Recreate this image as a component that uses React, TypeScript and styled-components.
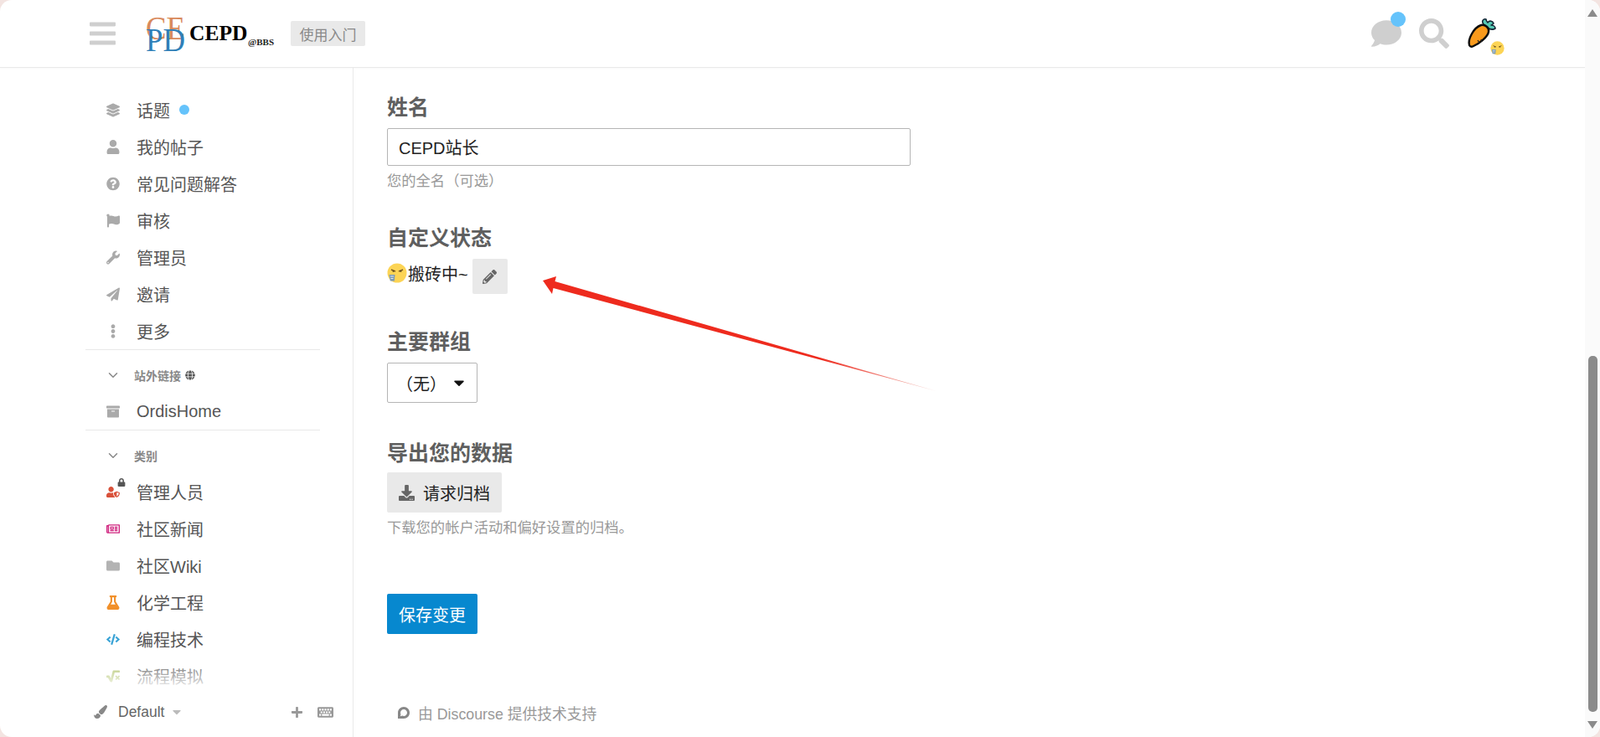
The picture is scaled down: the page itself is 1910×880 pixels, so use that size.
import React from 'react';
import styled, { createGlobalStyle } from 'styled-components';
import {
	FaLayerGroup, FaUser, FaQuestionCircle, FaFlag, FaWrench, FaPaperPlane, FaEllipsisV,
	FaGlobe, FaArchive, FaUserShield, FaRegNewspaper, FaFolder, FaFlask, FaCode, FaSquareRootAlt,
	FaPaintBrush, FaPlus, FaKeyboard, FaCaretDown, FaLock, FaDownload, FaPencilAlt, FaComment, FaSearch, FaBars, FaDiscourse,
} from 'react-icons/fa';
import { FiChevronDown } from 'react-icons/fi';

const FONT = `"Liberation Sans", "Noto Sans CJK SC", sans-serif`;

const GlobalStyle = createGlobalStyle`
	html, body {
		margin: 0;
		height: 100%;
		overflow: hidden;
		background: #f3e4e1;
		font-family: ${FONT};
	}
`;

const FaceEmoji = ({ size }: { size: number }) => (
	<svg width={size} height={size} viewBox="0 0 24 24">
		<circle cx="12" cy="12" r="11.5" fill="#fcd455" />
		<path d="M5 8l5 2M19 8l-5 2" stroke="#7a5a20" strokeWidth="1.4" fill="none" />
		<path d="M7 9.5l1 1M16 10.5l1-1" stroke="#4b3a18" strokeWidth="1.6" />
		<path d="M2.5 14h7l-.7 7.5h-5z" fill="#7d9bb5" />
		<path d="M4 16h4M4.5 18.5h3" stroke="#dfe8ee" strokeWidth="1" />
	</svg>
);

const Carrot = () => (
	<svg width="36" height="38" viewBox="0 0 36 38">
		<path d="M20 8c-3-4 0-7 3-6 0 2 1 3 2 4 2-3 6-2 7 1-1 1-2 2-3 2 3 0 5 2 5 4-3 2-6 1-8 0z" fill="#56c9b4" stroke="#123" strokeWidth="1.6" strokeLinejoin="round" />
		<path d="M3 33C1 26 8 12 17 9c5-1 10 3 9 8-1 6-11 14-18 17-2 1-4 1-5-1z" fill="#f99a1c" stroke="#0c0c0c" strokeWidth="2.4" strokeLinejoin="round" />
		<path d="M13 27l2 3M17 26l1 3" stroke="#222" strokeWidth="1.3" />
	</svg>
);

const navTop = [
	{ icon: <FaLayerGroup />, label: '话题', dot: true },
	{ icon: <FaUser />, label: '我的帖子' },
	{ icon: <FaQuestionCircle />, label: '常见问题解答' },
	{ icon: <FaFlag />, label: '审核' },
	{ icon: <FaWrench />, label: '管理员' },
	{ icon: <FaPaperPlane />, label: '邀请' },
	{ icon: <FaEllipsisV />, label: '更多' },
];

const categories = [
	{ icon: <FaUserShield />, label: '管理人员', color: '#d9513a', locked: true },
	{ icon: <FaRegNewspaper />, label: '社区新闻', color: '#d0237f' },
	{ icon: <FaFolder />, label: '社区Wiki', color: '#b3b3b3' },
	{ icon: <FaFlask />, label: '化学工程', color: '#f1902a' },
	{ icon: <FaCode />, label: '编程技术', color: '#3aa3d6' },
	{ icon: <FaSquareRootAlt />, label: '流程模拟', color: '#a9bd5c' },
];

const App = () => (
	<Page>
		<GlobalStyle />
		<Window>
			<Column>
				<Header>
					<MenuIcon />
					<Logo width="160" height="70" viewBox="0 0 160 70">
						<text x="1" y="42" fontFamily="Liberation Serif" fontSize="39" fill="#d98a5c" textLength="47" lengthAdjust="spacingAndGlyphs">CE</text>
						<text x="1" y="56" fontFamily="Liberation Serif" fontSize="39" fill="#2f7fb8" textLength="47" lengthAdjust="spacingAndGlyphs">PD</text>
						<text x="53" y="43" fontFamily="Liberation Serif" fontSize="25.5" fontWeight="700" fill="#000">CEPD</text>
						<text x="123" y="48.5" fontFamily="Liberation Serif" fontSize="11" fontWeight="700" fill="#222">@BBS</text>
					</Logo>
					<StartBadge>使用入门</StartBadge>
					<HeaderIcons>
						<ChatWrap>
							<FaComment size={36} color="#cfcfcf" />
							<BlueDot />
						</ChatWrap>
						<FaSearch size={36} color="#cfcfcf" />
						<AvatarWrap>
							<Carrot />
							<AvatarBadge>
								<FaceEmoji size={17} />
							</AvatarBadge>
						</AvatarWrap>
					</HeaderIcons>
				</Header>
				<Body>
					<Sidebar>
						<SideScroll>
							{navTop.map((item) => (
								<NavRow key={item.label}>
									<NavIcon>{item.icon}</NavIcon>
									<span>{item.label}</span>
									{item.dot && <SmallDot />}
								</NavRow>
							))}
							<Divider />
							<SectionRow>
								<FiChevronDown size={18} />
								<span>站外链接</span>
								<FaGlobe size={12} color="#555" />
							</SectionRow>
							<NavRow>
								<NavIcon>
									<FaArchive />
								</NavIcon>
								<span>OrdisHome</span>
							</NavRow>
							<Divider />
							<SectionRow>
								<FiChevronDown size={18} />
								<span>类别</span>
							</SectionRow>
							{categories.map((item) => (
								<NavRow key={item.label}>
									<NavIcon $color={item.color}>
										{item.icon}
										{item.locked && (
											<LockBadge>
												<FaLock size={10} />
											</LockBadge>
										)}
									</NavIcon>
									<span>{item.label}</span>
								</NavRow>
							))}
							<SideFade />
						</SideScroll>
						<SideFooter>
							<FaPaintBrush size={16} color="#888" />
							<ThemeName>Default</ThemeName>
							<FaCaretDown size={16} color="#bbb" />
							<FooterSpacer />
							<PlusIcon />
							<FaKeyboard size={19} color="#999" />
						</SideFooter>
					</Sidebar>
					<Main>
						<Section $after={43}>
							<Heading>姓名</Heading>
							<NameInput defaultValue="CEPD站长" />
							<Hint>您的全名（可选）</Hint>
						</Section>
						<Section $after={42}>
							<Heading>自定义状态</Heading>
							<StatusRow>
								<StatusLabel>
									<FaceEmoji size={24} />
									<StatusText>搬砖中~</StatusText>
								</StatusLabel>
								<EditButton>
									<FaPencilAlt size={17} color="#666" />
								</EditButton>
							</StatusRow>
						</Section>
						<Section $after={45}>
							<Heading>主要群组</Heading>
							<GroupSelect>
								<span>（无）</span>
								<FaCaretDown size={20} color="#111" />
							</GroupSelect>
						</Section>
						<Section $after={69}>
							<Heading>导出您的数据</Heading>
							<ArchiveButton>
								<FaDownload size={19} color="#666" />
								<span>请求归档</span>
							</ArchiveButton>
							<Hint>下载您的帐户活动和偏好设置的归档。</Hint>
						</Section>
						<SaveButton>保存变更</SaveButton>
						<PoweredBy>
							<FaDiscourse size={16} color="#888" />
							<span>由 Discourse 提供技术支持</span>
						</PoweredBy>
						<ArrowOverlay width="500" height="160" viewBox="0 0 500 160">
							<defs>
								<linearGradient id="arrowFade" x1="0" y1="0" x2="1" y2="0">
									<stop offset="0" stopColor="#ee2b1e" />
									<stop offset="0.7" stopColor="#ee2b1e" />
									<stop offset="1" stopColor="#f3c9c4" />
								</linearGradient>
							</defs>
							<path d="M4 13L20 8L18.5 14L474 145L16.5 22L15 29Z" fill="url(#arrowFade)" />
						</ArrowOverlay>
					</Main>
				</Body>
			</Column>
			<ScrollRail>
				<RailArrow $dir="up" />
				<RailTrack>
					<RailThumb />
				</RailTrack>
				<RailArrow $dir="down" />
			</ScrollRail>
		</Window>
	</Page>
);

export default App;

const Page = styled.div`
	height: 880px;
	width: 1910px;
`;

const Window = styled.div`
	height: 100%;
	display: flex;
	background: #fff;
	border-radius: 14px;
	overflow: hidden;
`;

const Column = styled.div`
	flex: 1;
	min-width: 0;
	display: flex;
	flex-direction: column;
`;

const Header = styled.header`
	height: 80px;
	flex-shrink: 0;
	display: flex;
	align-items: center;
	padding: 0 105px 0 107px;
	border-bottom: 1px solid #e9e9e9;
	box-shadow: 0 1px 2px rgba(0, 0, 0, 0.03);
`;

const MenuIcon = styled(FaBars)`
	width: 31px;
	height: 36px;
	color: #cfcfcf;
`;

const Logo = styled.svg`
	margin-left: 35px;
	flex-shrink: 0;
`;

const StartBadge = styled.div`
	margin-left: 14px;
	width: 89px;
	height: 30px;
	display: flex;
	align-items: center;
	justify-content: center;
	background: #e9e9e9;
	border-radius: 2px;
	color: #888;
	font-size: 17px;
`;

const HeaderIcons = styled.div`
	margin-left: auto;
	display: flex;
	align-items: center;
	gap: 21px;
`;

const ChatWrap = styled.div`
	position: relative;
	height: 36px;
`;

const BlueDot = styled.div`
	position: absolute;
	top: -8px;
	right: -5px;
	width: 18px;
	height: 18px;
	border-radius: 50%;
	background: #65c3fb;
`;

const AvatarWrap = styled.div`
	position: relative;
	height: 38px;
`;

const AvatarBadge = styled.div`
	position: absolute;
	right: -9px;
	bottom: -7px;
	line-height: 0;
`;

const Body = styled.div`
	flex: 1;
	min-height: 0;
	display: flex;
`;

const Sidebar = styled.aside`
	width: 422px;
	flex-shrink: 0;
	box-sizing: border-box;
	border-right: 1px solid #e9e9e9;
	display: flex;
	flex-direction: column;
	padding-left: 102px;
`;

const SideScroll = styled.div`
	position: relative;
	flex: 1;
	min-height: 0;
	width: 280px;
	overflow: hidden;
	padding-top: 28px;
`;

const SideFade = styled.div`
	position: absolute;
	left: 0;
	right: 0;
	bottom: 0;
	height: 40px;
	background: linear-gradient(rgba(255, 255, 255, 0), #fff);
`;

const NavRow = styled.div`
	height: 44px;
	display: flex;
	align-items: center;
	padding-left: 25px;
	font-size: 20px;
	color: #555;
`;

const NavIcon = styled.span<{ $color?: string }>`
	position: relative;
	width: 16px;
	margin-right: 20px;
	display: flex;
	justify-content: center;
	font-size: 17px;
	color: ${(p) => p.$color || '#aaa'};
`;

const SmallDot = styled.div`
	width: 12px;
	height: 12px;
	margin-left: 11px;
	border-radius: 50%;
	background: #65c3fb;
`;

const LockBadge = styled.span`
	position: absolute;
	top: -8px;
	right: -7px;
	color: #555;
	line-height: 0;
`;

const Divider = styled.div`
	height: 1px;
	background: #e9e9e9;
`;

const SectionRow = styled.div`
	height: 42px;
	margin-top: 9px;
	display: flex;
	align-items: center;
	padding-left: 24px;
	font-size: 14px;
	font-weight: 700;
	color: #888;
	gap: 5px;

	& > svg:first-child {
		margin-right: 11px;
	}
`;

const SideFooter = styled.div`
	height: 55px;
	flex-shrink: 0;
	display: flex;
	align-items: center;
	margin-left: 10px;
	width: 286px;
	padding-bottom: 5px;
	box-sizing: border-box;
`;

const ThemeName = styled.span`
	margin: 0 7px 0 13px;
	font-size: 17.5px;
	color: #666;
`;

const FooterSpacer = styled.div`
	flex: 1;
`;

const PlusIcon = styled(FaPlus)`
	width: 15px;
	height: 15px;
	color: #999;
	margin-right: 17px;
`;

const Main = styled.main`
	position: relative;
	flex: 1;
	padding: 32px 0 0 40px;
	color: #222;
`;

const Section = styled.section<{ $after: number }>`
	margin-bottom: ${(p) => p.$after}px;
`;

const Heading = styled.h2`
	margin: 0 0 10px;
	height: 30px;
	line-height: 30px;
	font-size: 25px;
	font-weight: 700;
	color: #5f5f5f;
`;

const NameInput = styled.input`
	display: block;
	box-sizing: border-box;
	width: 625px;
	height: 45px;
	padding: 0 13px;
	border: 1px solid #b5b5b5;
	border-radius: 2px;
	font-family: ${FONT};
	font-size: 20px;
	color: #222;
	outline: none;
`;

const Hint = styled.div`
	margin-top: 8px;
	height: 20px;
	line-height: 20px;
	font-size: 17.3px;
	color: #999;
`;

const StatusRow = styled.div`
	height: 42px;
	display: flex;
	align-items: center;
`;

const StatusLabel = styled.div`
	display: flex;
	align-items: center;
	gap: 1px;
	margin-bottom: 8px;
`;

const StatusText = styled.span`
	font-size: 20px;
	margin-right: 5px;
	color: #222;
`;

const EditButton = styled.div`
	width: 42px;
	height: 42px;
	display: flex;
	align-items: center;
	justify-content: center;
	background: #e9e9e9;
	border-radius: 2px;
`;

const GroupSelect = styled.div`
	box-sizing: border-box;
	width: 108px;
	height: 48px;
	display: flex;
	align-items: center;
	padding: 0 11px 0 10px;
	justify-content: space-between;
	border: 1px solid #b5b5b5;
	border-radius: 2px;
	font-size: 20px;
`;

const ArchiveButton = styled.div`
	width: 137px;
	height: 48px;
	box-sizing: border-box;
	margin-top: -2px;
	padding-left: 14px;
	display: flex;
	align-items: center;
	gap: 10px;
	background: #e9e9e9;
	border-radius: 2px;
	font-size: 20px;
	color: #222;
`;

const SaveButton = styled.div`
	width: 108px;
	height: 48px;
	display: flex;
	align-items: center;
	justify-content: center;
	background: #0788cf;
	border-radius: 2px;
	font-size: 20px;
	color: #fff;
`;

const PoweredBy = styled.div`
	margin: 81px 0 0 12px;
	display: flex;
	align-items: center;
	gap: 9px;
	font-size: 17.8px;
	color: #999;
`;

const ArrowOverlay = styled.svg`
	position: absolute;
	left: 222px;
	top: 241px;
`;

const ScrollRail = styled.div`
	width: 18px;
	flex-shrink: 0;
	display: flex;
	flex-direction: column;
	align-items: center;
	background: #fafafa;
	padding: 11px 0 10px;
	box-sizing: border-box;
`;

const RailArrow = styled.div<{ $dir: 'up' | 'down' }>`
	width: 0;
	height: 0;
	border-left: 6px solid transparent;
	border-right: 6px solid transparent;
	${(p) => (p.$dir === 'up' ? 'border-bottom: 9px solid #8b8b8b;' : 'border-top: 9px solid #8b8b8b;')}
`;

const RailTrack = styled.div`
	flex: 1;
	width: 100%;
	display: flex;
	justify-content: center;
	align-items: flex-end;
	padding-bottom: 11px;
`;

const RailThumb = styled.div`
	width: 11px;
	height: 425px;
	border-radius: 5px;
	background: #8b8b8b;
`;
